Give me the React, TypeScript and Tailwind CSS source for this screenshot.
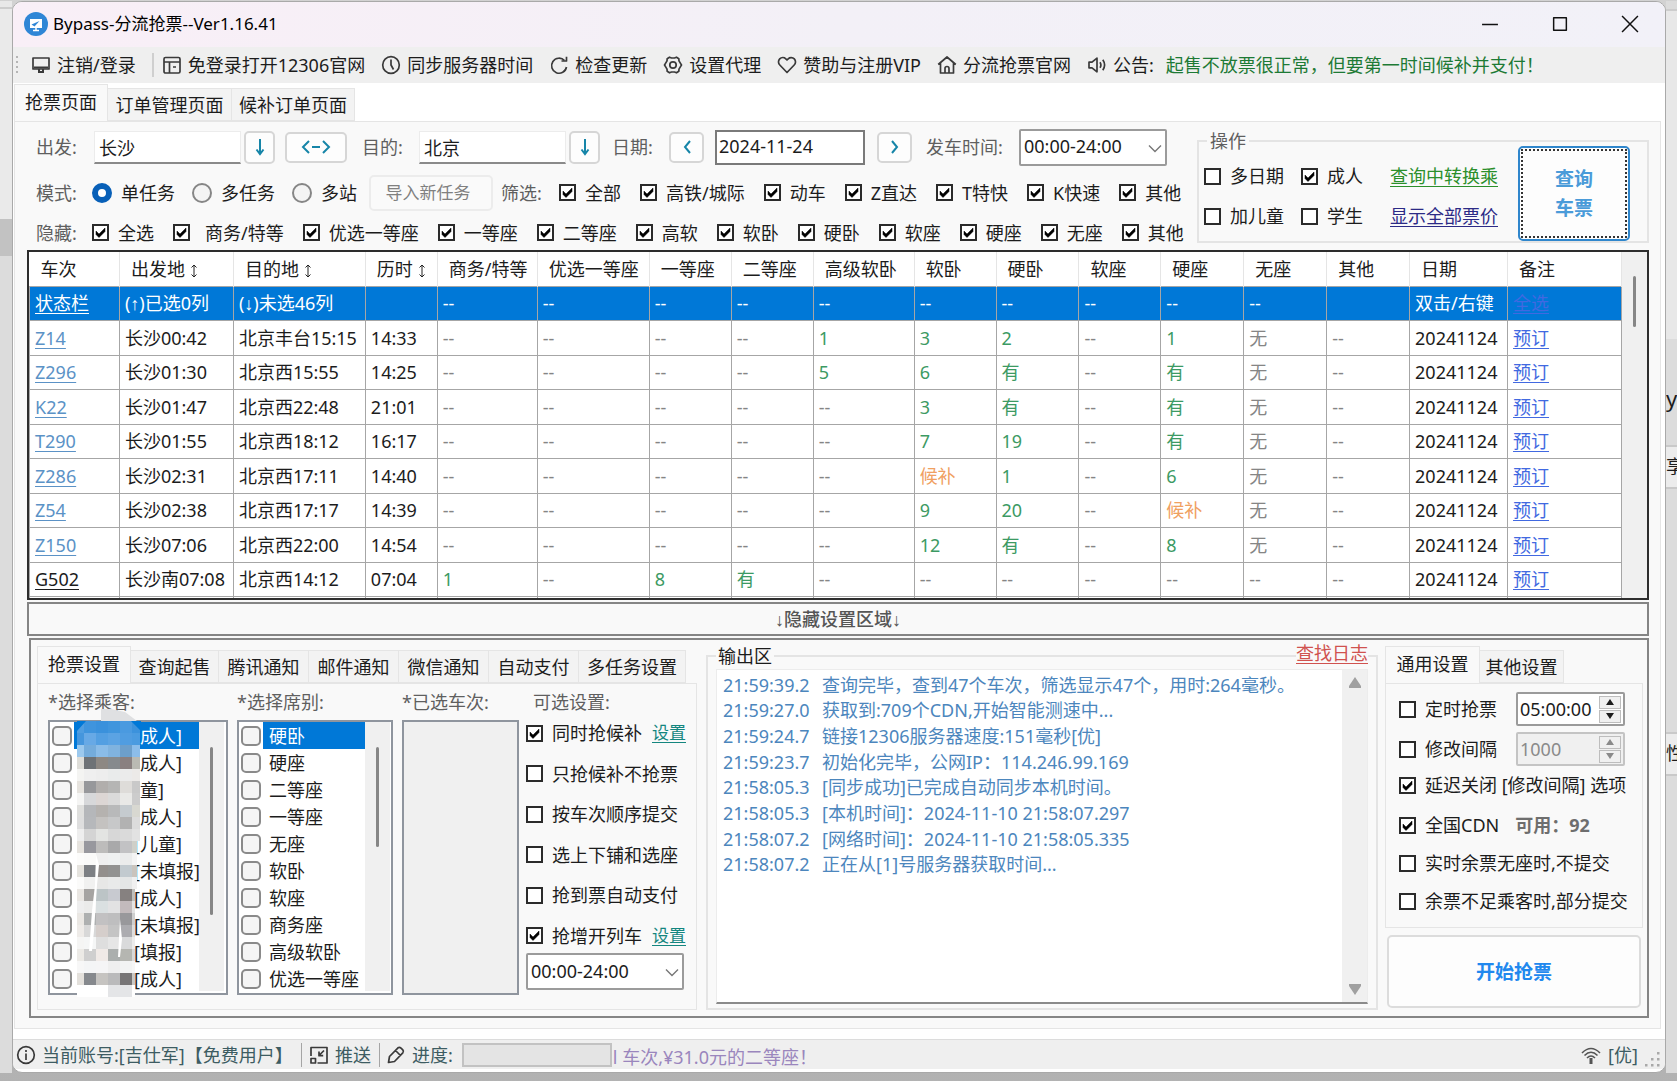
import type { ReactNode } from "react";

const links = "underline underline-offset-3 decoration-1";

type Check = { label: string; checked?: boolean; wide?: boolean };

const trainTypes = ["全部", "高铁/城际", "动车", "Z直达", "T特快", "K快速", "其他"];

const seatTypes = [
  "全选",
  "商务/特等",
  "优选一等座",
  "一等座",
  "二等座",
  "高软",
  "软卧",
  "硬卧",
  "软座",
  "硬座",
  "无座",
  "其他",
];

const columns = [
  { name: "车次", width: "w-[90px]" },
  { name: "出发地", width: "w-[114px]", sort: true },
  { name: "目的地", width: "w-[132px]", sort: true },
  { name: "历时", width: "w-[72px]", sort: true },
  { name: "商务/特等", width: "w-[100px]" },
  { name: "优选一等座", width: "w-[112px]" },
  { name: "一等座", width: "w-[82px]" },
  { name: "二等座", width: "w-[82px]" },
  { name: "高级软卧", width: "w-[101px]" },
  { name: "软卧", width: "w-[82px]" },
  { name: "硬卧", width: "w-[83px]" },
  { name: "软座", width: "w-[82px]" },
  { name: "硬座", width: "w-[83px]" },
  { name: "无座", width: "w-[83px]" },
  { name: "其他", width: "w-[83px]" },
  { name: "日期", width: "w-[98px]" },
  { name: "备注", width: "w-[114px]" },
];

const trains = [
  ["Z14", "长沙00:42", "北京丰台15:15", "14:33", "--", "--", "--", "--", "1", "3", "2", "--", "1", "无", "--"],
  ["Z296", "长沙01:30", "北京西15:55", "14:25", "--", "--", "--", "--", "5", "6", "有", "--", "有", "无", "--"],
  ["K22", "长沙01:47", "北京西22:48", "21:01", "--", "--", "--", "--", "--", "3", "有", "--", "有", "无", "--"],
  ["T290", "长沙01:55", "北京西18:12", "16:17", "--", "--", "--", "--", "--", "7", "19", "--", "有", "无", "--"],
  ["Z286", "长沙02:31", "北京西17:11", "14:40", "--", "--", "--", "--", "--", "候补", "1", "--", "6", "无", "--"],
  ["Z54", "长沙02:38", "北京西17:17", "14:39", "--", "--", "--", "--", "--", "9", "20", "--", "候补", "无", "--"],
  ["Z150", "长沙07:06", "北京西22:00", "14:54", "--", "--", "--", "--", "--", "12", "有", "--", "8", "无", "--"],
  ["G502", "长沙南07:08", "北京西14:12", "07:04", "1", "--", "8", "有", "--", "--", "--", "--", "--", "--", "--"],
];

const statusRow = ["(↑)已选0列", "(↓)未选46列", "", "--", "--", "--", "--", "--", "--", "--", "--", "--", "--", "", "双击/右键"];

const settingTabs = [
  { name: "查询起售", width: "w-[88px]" },
  { name: "腾讯通知", width: "w-[90px]" },
  { name: "邮件通知", width: "w-[90px]" },
  { name: "微信通知", width: "w-[90px]" },
  { name: "自动支付", width: "w-[90px]" },
  { name: "多任务设置", width: "w-[107px]" },
];

const passengers = [
  "[成人]",
  "[成人]",
  "[童]",
  "[成人]",
  "[儿童]",
  "[未填报]",
  "[成人]",
  "[未填报]",
  "[填报]",
  "[成人]",
];

const seats = ["硬卧", "硬座", "二等座", "一等座", "无座", "软卧", "软座", "商务座", "高级软卧", "优选一等座"];

const options = [
  { label: "同时抢候补", checked: true, setup: true },
  { label: "只抢候补不抢票" },
  { label: "按车次顺序提交" },
  { label: "选上下铺和选座" },
  { label: "抢到票自动支付" },
  { label: "抢增开列车", checked: true, setup: true },
];

const logs = [
  ["21:59:39.2", "查询完毕，查到47个车次，筛选显示47个，用时:264毫秒。"],
  ["21:59:27.0", "获取到:709个CDN,开始智能测速中..."],
  ["21:59:24.7", "链接12306服务器速度:151毫秒[优]"],
  ["21:59:23.7", "初始化完毕，公网IP：114.246.99.169"],
  ["21:58:05.3", "[同步成功]已完成自动同步本机时间。"],
  ["21:58:05.3", "[本机时间]：2024-11-10 21:58:07.297"],
  ["21:58:07.2", "[网络时间]：2024-11-10 21:58:05.335"],
  ["21:58:07.2", "正在从[1]号服务器获取时间..."],
];

// censored passenger names, one row of tiles per 12px
const mosaic = [
  ["#4f9de0", "#3f94dd", "#3a91dc", "#3f95dd", "#4a9ae0", "#3c92dc"],
  ["#4596dd", "#67a9e6", "#539fe2", "#5ba3e3", "#509de1", "#4b9be0"],
  ["#9cc9ee", "#74acdc", "#8abce8", "#80b3df", "#6d9fcb", "#8cbdea"],
  ["#deddd8", "#6e7276", "#8d8883", "#868a8d", "#8a8080", "#babab3"],
  ["#f4f4f2", "#efefef", "#ededed", "#e9ebeb", "#ebebeb", "#eceae8"],
  ["#e6e3de", "#97989b", "#b1aeac", "#b5b5b4", "#dedcd9", "#c9c9c9"],
  ["#f5f5f4", "#d7d8da", "#dcd6d4", "#dadada", "#e9e9e7", "#cccccc"],
  ["#dfdfdd", "#b5b7ba", "#b5b2af", "#b8b9ba", "#c5cbcf", "#d8d8d1"],
  ["#dedede", "#b6b8bb", "#c4c2c0", "#c7c8c9", "#b2b2b2", "#dcdcdc"],
  ["#eeeeee", "#d4d4d4", "#e3e4e2", "#d7d7d7", "#dadada", "#e2e2e2"],
  ["#e6e3de", "#98989e", "#bdbcbb", "#a9a9aa", "#c2c2c4", "#cfcfc8"],
  ["#fcfcfb", "#fafaf9", "#efefef", "#eff1f1", "#ebecec", "#f4f4f4"],
  ["#e5e3de", "#7d8084", "#938f8c", "#929291", "#c2cacf", "#cac4bd"],
  ["#fbfbfa", "#f1f1f0", "#e7e7e6", "#e9eaea", "#e4e6e6", "#f0f0f0"],
  ["#e9e6e2", "#a6a4a2", "#bcc4c6", "#c8cad0", "#868180", "#bfbfbc"],
  ["#eeeeee", "#ebebea", "#dae0e1", "#e2e2e3", "#c2babc", "#e3e3e3"],
  ["#eae7e3", "#aeb0b0", "#c2c1c2", "#bebebf", "#98989b", "#cfcfcf"],
  ["#eeebe8", "#d8d8d8", "#d5cecb", "#c4c4c4", "#acacb0", "#dddddd"],
  ["#f5f5f4", "#f5f6f6", "#dedede", "#e6e6e6", "#d9dadb", "#ececec"],
  ["#eceae6", "#cfcfcf", "#f0eae7", "#abafae", "#b5b6b1", "#d8d8d8"],
  ["#f7f7f7", "#f4f5f6", "#f5f5f6", "#efefef", "#f2f3f3", "#f6f6f6"],
  ["#e3e0db", "#86898d", "#c6c4c1", "#bababb", "#777576", "#c8c8c5"],
  ["#ffffff", "#ffffff", "#ffffff", "#e4e5e7", "#e4e5e7", "#ffffff"],
];

function CheckBox({ label, checked, wide }: Check) {
  return (
    <label className={`flex shrink-0 items-center ${wide ? "gap-[15px]" : "gap-[9px]"}`}>
      <span className="relative size-[17px]">
        <input
          type="checkbox"
          defaultChecked={checked}
          className="peer block size-[17px] appearance-none border-2 border-[#2b2b2b] bg-white"
        />
        <svg viewBox="0 0 17 17" className="pointer-events-none absolute inset-0 hidden size-[17px] peer-checked:block">
          <path d="M4 7l3 3 6-6v3.5l-6 6-3-3z" fill="#000" stroke="#000" strokeWidth="0.5" />
        </svg>
      </span>
      {label}
    </label>
  );
}

function Radio({ label, checked }: Check) {
  return (
    <label className="flex shrink-0 items-center gap-[9px]">
      <input
        type="radio"
        name="mode"
        defaultChecked={checked}
        className="size-5 appearance-none rounded-full border-2 border-[#868686] bg-[#f4f4f4] checked:border-[6px] checked:border-[#0860b8] checked:bg-white"
      />
      {label}
    </label>
  );
}

function TimeSelect({ id, width }: { id: string; width: string }) {
  return (
    <div className={`relative shrink-0 ${width}`}>
      <select
        id={id}
        aria-label="时间段"
        className="block h-[37px] w-full appearance-none rounded-[2px] border-2 border-[#9b9b9b] bg-white pb-[2px] pl-[3px]"
      >
        <option>00:00-24:00</option>
      </select>
      <svg viewBox="0 0 14 10" className="pointer-events-none absolute top-[15px] right-[5px] h-[10px] w-[14px]">
        <path d="M1 1.500l6 6 6-6" fill="none" stroke="#777" strokeWidth="1.4" />
      </svg>
    </div>
  );
}

function IconButton({ name, className, children }: { name: string; className: string; children: ReactNode }) {
  return (
    <button
      aria-label={name}
      className={`flex shrink-0 items-center justify-center rounded-[5px] border-2 border-[#d6d6d6] bg-[#fdfdfd] text-[#1685a8] ${className}`}
    >
      {children}
    </button>
  );
}

function Glyph({ d, w = 20 }: { d: string; w?: number }) {
  return (
    <svg width={w} height="20" viewBox={`0 0 ${w} 20`} fill="none" stroke="currentColor" strokeWidth="2">
      <path d={d} />
    </svg>
  );
}

function ToolIcon({ children }: { children: ReactNode }) {
  return (
    <svg
      viewBox="0 0 20 20"
      className="size-5 shrink-0"
      fill="none"
      stroke="#3a3a3a"
      strokeWidth="1.7"
      strokeLinejoin="round"
    >
      {children}
    </svg>
  );
}

function ToolItem({ icon, text }: { icon: ReactNode; text: string }) {
  return (
    <button className="flex shrink-0 items-center gap-[6px] whitespace-nowrap">
      <ToolIcon>{icon}</ToolIcon>
      {text}
    </button>
  );
}

function Tab({ text, width, active }: { text: string; width: string; active?: boolean }) {
  return (
    <button
      className={
        active
          ? `h-[37px] shrink-0 border border-b-0 border-[#e5e5e5] bg-[#f9f9f9] pb-[2px] ${width}`
          : `h-[33px] shrink-0 border border-l-0 border-[#e5e5e5] bg-[#f3f3f3] ${width}`
      }
    >
      {text}
    </button>
  );
}

function Toolbar() {
  return (
    <div className="flex h-[36px] items-center gap-4 overflow-hidden bg-[#efefef] pb-px pl-[3px] whitespace-nowrap">
      <div className="-mr-[3px] flex flex-col gap-[3px]">
        {[0, 1, 2, 3].map((n) => (
          <i key={n} className="size-[2px] bg-[#b5b5b5]" />
        ))}
      </div>
      <ToolItem
        text="注销/登录"
        icon={
          <>
            <path d="M2 3h16v11H2z" />
            <path d="M3 12.500h14M7 17h6M8 14v3M12 14v3" strokeWidth="2" />
          </>
        }
      />
      <div className="-mr-[8px] h-[24px] w-[2px] bg-[#cfcfcf]" />
      <ToolItem
        text="免登录打开12306官网"
        icon={
          <>
            <rect x="2" y="2.500" width="16" height="15.500" rx="1.500" />
            <path d="M2 7h16M7.500 7v11M11 12h3" />
          </>
        }
      />
      <ToolItem
        text="同步服务器时间"
        icon={
          <>
            <circle cx="10" cy="10" r="8.300" />
            <path d="M10 4.500V10l2.500 4.500" />
          </>
        }
      />
      <ToolItem
        text="检查更新"
        icon={
          <>
            <path d="M15.500 5.500A7.500 7.500 0 1 0 17.500 12" />
            <path d="M12.500 6h5V1.800" />
          </>
        }
      />
      <ToolItem
        text="设置代理"
        icon={
          <>
            <path d="M6.500 2.200l2 .8h3l2-.8 2.300 1.500.2 2.200 1.500 2.500 1 1.600-1 1.600-1.500 2.500-.2 2.200-2.300 1.500-2-.8h-3l-2 .8-2.300-1.500-.2-2.200-1.500-2.500-1-1.600 1-1.600L4 5.900l.2-2.200z" />
            <circle cx="10" cy="10" r="3.200" />
          </>
        }
      />
      <ToolItem
        text="赞助与注册VIP"
        icon={<path d="M10 17.500L2.800 10a4.300 4.300 0 0 1 6-6.200L10 5l1.200-1.200a4.300 4.300 0 0 1 6 6.200z" />}
      />
      <ToolItem
        text="分流抢票官网"
        icon={<path d="M1.200 9.500L10 2l8.800 7.500M3.500 8v10h13V8M8 18v-4.500a2 2 0 0 1 4 0V18" />}
      />
      <ToolItem
        text="公告:"
        icon={<path d="M2 7.200v5.600h3l5 4V3.200l-5 4zM13 7.200q1.800 2.800 0 5.600M15.800 4.800q3.600 5.200 0 10.400" />}
      />
      <span className="-ml-[4px] text-[#1d7a35]">起售不放票很正常，但要第一时间候补并支付！</span>
    </div>
  );
}

function QueryPanel() {
  const input = "h-[33px] shrink-0 border border-b-2 border-[#ececec] border-b-[#8a8a8a] bg-white pl-1";
  return (
    <div className="flex h-[128px] pt-[2px]">
      <div className="flex min-w-0 flex-1 flex-col pl-[9px] whitespace-nowrap">
        <div className="flex h-[46px] items-center">
          <label htmlFor="from" className="w-[58px] shrink-0 text-[#5f5f5f]">出发:</label>
          <input id="from" defaultValue="长沙" className={`w-[147px] ${input}`} />
          <IconButton name="选择出发站" className="ml-[3px] h-[33px] w-[31px]">
            <Glyph d="M10 2v15M6.500 12.500l3.500 4.500 3.500-4.500" />
          </IconButton>
          <IconButton name="交换" className="ml-[10px] h-[31px] w-[62px]">
            <Glyph w={32} d="M9 4l-6 6 6 6M12 10h8M23 4l6 6-6 6" />
          </IconButton>
          <label htmlFor="to" className="ml-[15px] w-[57px] shrink-0 text-[#5f5f5f]">目的:</label>
          <input id="to" defaultValue="北京" className={`w-[147px] ${input}`} />
          <IconButton name="选择目的站" className="ml-[3px] h-[33px] w-[31px]">
            <Glyph d="M10 2v15M6.500 12.500l3.500 4.500 3.500-4.500" />
          </IconButton>
          <label htmlFor="date" className="ml-[12px] w-[57px] shrink-0 text-[#5f5f5f]">日期:</label>
          <IconButton name="前一天" className="h-[31px] w-[35px]">
            <Glyph d="M13 4l-5 6 5 6" />
          </IconButton>
          <input
            id="date"
            defaultValue="2024-11-24"
            className="ml-[11px] h-[35px] w-[150px] shrink-0 border-2 border-[#7a7a7a] bg-white pb-[2px] pl-[2px]"
          />
          <IconButton name="后一天" className="ml-[12px] h-[31px] w-[35px]">
            <Glyph d="M7 4l5 6-5 6" />
          </IconButton>
          <label htmlFor="depart" className="ml-[14px] w-[93px] shrink-0 text-[#5f5f5f]">发车时间:</label>
          <TimeSelect id="depart" width="w-[148px]" />
        </div>
        <div className="flex h-[45px] items-center">
          <span className="w-[56px] shrink-0 text-[#5f5f5f]">模式:</span>
          <div className="flex gap-[17px]">
            <Radio label="单任务" checked />
            <Radio label="多任务" />
            <Radio label="多站" />
          </div>
          <button className="ml-[12px] h-[36px] w-[124px] shrink-0 rounded-[5px] border-2 border-[#ececec] bg-[#fafafa] pr-[6px] text-[17px] text-[#808080]">
            导入新任务
          </button>
          <span className="ml-[8px] w-[58px] shrink-0 text-[#5f5f5f]">筛选:</span>
          <div className="flex gap-[19px]">
            {trainTypes.map((t) => (
              <CheckBox key={t} label={t} checked />
            ))}
          </div>
        </div>
        <div className="flex h-[35px] items-center">
          <span className="w-[56px] shrink-0 text-[#5f5f5f]">隐藏:</span>
          <div className="flex gap-[19px]">
            {seatTypes.map((t) => (
              <CheckBox key={t} label={t} checked wide={t === "商务/特等"} />
            ))}
          </div>
        </div>
      </div>
      <fieldset className="mt-[5px] flex h-[114px] w-[452px] shrink-0 gap-5 border-2 border-[#e4e4e4] pl-[5px] whitespace-nowrap">
        <legend className="ml-[3px] px-[3px] leading-6 text-[#5f5f5f]">操作</legend>
        <div className="mt-[3px] grid h-[80px] grid-cols-[97px_89px_auto] items-center">
          <CheckBox label="多日期" />
          <CheckBox label="成人" checked />
          <a href="#transfer" className={`text-[#2b8f2b] ${links}`}>查询中转换乘</a>
          <CheckBox label="加儿童" />
          <CheckBox label="学生" />
          <a href="#prices" className={`text-[#2c2a86] ${links}`}>显示全部票价</a>
        </div>
        <button className="-mt-[7px] h-[95px] w-[112px] rounded-[5px] border-2 border-[#2f86cc] bg-[#fdfdfd] p-px font-bold text-[#4a9bd9]">
          <span className="flex h-full items-center justify-center border-2 border-dotted border-[#333] text-[19px] leading-[29px]">
            查询
            <br />
            车票
          </span>
        </button>
      </fieldset>
    </div>
  );
}

function cellColor(value: string) {
  if (value === "--" || value === "无") return "text-[#858585]";
  if (value === "候补") return "text-[#f0a061]";
  return "text-[#3c9a63]";
}

function TrainTable() {
  const cell = "border border-[#a6a6a6] p-0 pl-[5px]";
  return (
    <div className="flex h-[350px] overflow-hidden border-2 border-[#2d2d2d] bg-white">
      <table className="min-w-0 flex-1 table-fixed border-collapse text-left whitespace-nowrap">
        <thead>
          <tr className="h-[34px]">
            {columns.map((c) => (
              <th key={c.name} className={`border-r border-[#e5e5e5] p-0 pl-[11px] font-normal ${c.width}`}>
                {c.name}
                {c.sort && (
                  <svg viewBox="0 0 8 14" className="ml-[5px] inline h-[14px] w-[8px]" fill="none" stroke="#222">
                    <path d="M4 1v12M1.500 3.500L4 1l2.500 2.500M1.500 10.500L4 13l2.500-2.500" />
                  </svg>
                )}
              </th>
            ))}
          </tr>
        </thead>
        <tbody>
          <tr className="h-[34px] bg-[#0078d7] text-white">
            <td className={cell}>
              <a href="#status" className={links}>状态栏</a>
            </td>
            {statusRow.map((v, i) => (
              <td key={i} className={cell}>{v}</td>
            ))}
            <td className={cell}>
              <a href="#all" className={`text-[#4169e1] ${links}`}>全选</a>
            </td>
          </tr>
          {trains.map(([no, from, to, time, ...rest]) => (
            <tr key={no} className="odd:h-[34px] even:h-[35px]">
              <td className={cell}>
                <a href={`#${no}`} className={`${no === "G502" ? "text-[#1c1c1c]" : "text-[#5b92c6]"} ${links}`}>
                  {no}
                </a>
              </td>
              <td className={cell}>{from}</td>
              <td className={cell}>{to}</td>
              <td className={cell}>{time}</td>
              {rest.map((v, i) => (
                <td key={i} className={`${cell} ${cellColor(v)}`}>{v}</td>
              ))}
              <td className={cell}>20241124</td>
              <td className={cell}>
                <a href={`#book-${no}`} className={`text-[#4169e1] ${links}`}>预订</a>
              </td>
            </tr>
          ))}
          <tr className="h-[4px]">
            {columns.map((c) => (
              <td key={c.name} className="border-x border-[#a6a6a6] p-0" />
            ))}
          </tr>
        </tbody>
      </table>
      <div className="w-[25px] shrink-0 bg-[#f0f0f0] pt-[24px]">
        <div className="mx-auto h-[51px] w-[3px] rounded-full bg-[#868686]" />
      </div>
    </div>
  );
}

function CheckList({ items, kind, thumb }: { items: string[]; kind: "passenger" | "seat"; thumb: string }) {
  const passenger = kind === "passenger";
  return (
    <div className="flex h-[275px] border-2 border-[#8f959e] bg-white pr-[2px] pb-[2px] pl-px">
      <div className="flex-1">
        {items.map((t, i) => (
          <label key={i} className="flex h-[27px] items-center pl-px">
            <input
              type="checkbox"
              className="size-[20px] shrink-0 appearance-none rounded-[5px] border-2 border-[#8a8a8a] bg-[#f5f5f5]"
            />
            <span
              className={`ml-[2px] flex h-[27px] items-center whitespace-nowrap ${passenger ? "w-[125px] pl-[60px]" : "w-[102px] pl-[6px]"} ${i === 0 ? "bg-[#0078d7] text-white" : ""}`}
            >
              {t}
            </span>
          </label>
        ))}
      </div>
      <div className="w-[25px] shrink-0 bg-[#f0f0f0] pt-[25px]">
        <div className={`mx-auto w-[3px] rounded-full bg-[#868686] ${thumb}`} />
      </div>
    </div>
  );
}

function Mosaic() {
  return (
    <svg viewBox="0 0 64 288" className="pointer-events-none absolute -top-[11px] left-[29px] h-[288px] w-[64px]">
      <path d="M24 12V0h10l14 3 12 9z" fill="#dfe0e2" />
      {mosaic.map((row, y) =>
        row.map((fill, x) => {
          // the last column narrows further down the list
          const last = y > 13 ? 3 : y > 9 ? 5 : 8;
          return (
            <rect
              key={`${x}-${y}`}
              x={x === 0 ? 0 : x * 12 - 5}
              y={12 + y * 12}
              width={x === 0 ? 7 : x === 5 ? last : 12}
              height="12"
              fill={fill}
            />
          );
        }),
      )}
      <path d="M19 145l3 11-2 20-1 16-2 30-2 20h-3l3-40 3-26zM43 210l2 20-2 18h-2z" fill="#fff" />
      <path d="M34 276h14v12H36z" fill="#e4e5e7" />
      <path d="M0 12h9L0 22zM54 12h10v10z" fill="#0078d7" />
    </svg>
  );
}

function GrabSettings() {
  return (
    <div className="flex w-[660px] shrink-0 flex-col">
      <div className="flex h-[36px] items-end">
        <Tab text="抢票设置" width="w-[94px]" active />
        {settingTabs.map((t) => (
          <Tab key={t.name} text={t.name} width={t.width} />
        ))}
      </div>
      <div className="flex h-[327px] border border-[#e5e5e5] pl-[10px] whitespace-nowrap">
        <div className="w-[180px]">
          <h3 className="h-[36px] leading-[36px] text-[#5f5f5f]">*选择乘客:</h3>
          <div className="relative">
            <CheckList items={passengers} kind="passenger" thumb="h-[168px]" />
            <Mosaic />
          </div>
        </div>
        <div className="ml-[9px] w-[156px]">
          <h3 className="h-[36px] leading-[36px] text-[#5f5f5f]">*选择席别:</h3>
          <CheckList items={seats} kind="seat" thumb="h-[100px]" />
        </div>
        <div className="ml-[9px] w-[117px]">
          <h3 className="h-[36px] leading-[36px] text-[#5f5f5f]">*已选车次:</h3>
          <div className="h-[275px] border-2 border-[#8f959e] bg-[#f0f0f0]" />
        </div>
        <div className="ml-[7px] w-[160px]">
          <h3 className="h-[36px] pl-[7px] leading-[36px] text-[#5f5f5f]">可选设置:</h3>
          <div className="mb-[4px] flex h-[229px] flex-col justify-between">
            {options.map((o) => (
              <div key={o.label} className="flex h-[26px] items-center justify-between">
                <CheckBox label={o.label} checked={o.checked} />
                {o.setup && <a href="#setup" className={`text-[17px] text-[#14867f] ${links}`}>设置</a>}
              </div>
            ))}
          </div>
          <TimeSelect id="extra" width="w-[158px]" />
        </div>
      </div>
    </div>
  );
}

function Output() {
  return (
    <fieldset className="relative -mt-[4px] ml-[9px] h-[367px] min-w-0 flex-1 border-2 border-[#e4e4e4] px-[8px]">
      <legend className="px-[2px] leading-[26px]">输出区</legend>
      <a href="#log" className={`absolute -top-[29px] right-[8px] bg-[#f9f9f9] text-[#d0524f] ${links}`}>查找日志</a>
      <div className="flex h-[335px] border border-b-2 border-[#ececec] border-b-[#8a8a8a] bg-white">
        <ol className="grid h-[207px] min-w-0 flex-1 grid-rows-8 items-center pt-[2px] pl-[6px] whitespace-nowrap text-[#4c86bd]">
          {logs.map(([time, text], i) => (
            <li key={i} className="flex">
              <time className="w-[99px] shrink-0">{time}</time>
              {text}
            </li>
          ))}
        </ol>
        <div className="flex w-[25px] shrink-0 flex-col items-center justify-between bg-[#f0f0f0] py-[7px]">
          <svg viewBox="0 0 14 12" className="h-[12px] w-[14px]" fill="#a0a0a0">
            <path d="M7 0l6 9v2H1V9z" />
          </svg>
          <svg viewBox="0 0 14 12" className="h-[12px] w-[14px]" fill="#a0a0a0">
            <path d="M7 12l6-9V1H1v2z" />
          </svg>
        </div>
      </div>
    </fieldset>
  );
}

function Spinner({ value, label, disabled }: { value: string; label: string; disabled?: boolean }) {
  const step = "flex h-[13px] w-[22px] items-center justify-center border border-[#bdbdbd] bg-[#f0f0f0]";
  return (
    <div
      className={`flex h-[34px] w-[109px] items-center rounded-[2px] border-2 ${disabled ? "border-[#c4c4c4] bg-[#f0f0f0] text-[#8a8a8a]" : "border-[#9b9b9b] bg-white"}`}
    >
      <input aria-label={label} defaultValue={value} disabled={disabled} className="w-[80px] min-w-0 flex-1 pl-[2px]" />
      <div className="mr-[2px] flex flex-col gap-px">
        <button aria-label="增加" className={step}>
          <svg viewBox="0 0 8 6" className="h-[6px] w-[8px]" fill="currentColor"><path d="M4 0l4 6H0z" /></svg>
        </button>
        <button aria-label="减少" className={step}>
          <svg viewBox="0 0 8 6" className="h-[6px] w-[8px]" fill="currentColor"><path d="M4 6l4-6H0z" /></svg>
        </button>
      </div>
    </div>
  );
}

function CommonSettings() {
  return (
    <div className="mr-[4px] ml-[7px] flex w-[258px] shrink-0 flex-col whitespace-nowrap">
      <div className="flex h-[36px] items-end">
        <Tab text="通用设置" width="w-[95px]" active />
        <Tab text="其他设置" width="w-[84px]" />
      </div>
      <div className="h-[245px] border border-[#e5e5e5] pt-[8px] pl-[13px]">
        <div className="mb-[6px] flex items-center gap-[19px]">
          <CheckBox label="定时抢票" />
          <Spinner value="05:00:00" label="定时" />
        </div>
        <div className="flex items-center gap-[19px]">
          <CheckBox label="修改间隔" />
          <Spinner value="1000" label="间隔" disabled />
        </div>
        <div className="mb-[2px] flex h-[38px] items-center">
          <CheckBox label="延迟关闭 [修改间隔] 选项" checked />
        </div>
        <div className="flex h-[38px] items-center gap-[16px]">
          <CheckBox label="全国CDN" checked />
          <b className="text-[#6e6e6e]">可用：92</b>
        </div>
        <div className="flex h-[38px] items-center">
          <CheckBox label="实时余票无座时,不提交" />
        </div>
        <div className="flex h-[38px] items-center">
          <CheckBox label="余票不足乘客时,部分提交" />
        </div>
      </div>
      <button className="mx-[2px] mt-[7px] h-[73px] rounded-[5px] border-2 border-[#dcdcdc] bg-[#fdfdfd] text-[19px] font-bold text-[#2188ee]">
        开始抢票
      </button>
    </div>
  );
}

function StatusBar() {
  return (
    <footer className="flex h-[30px] items-center border-t border-[#dcdcdc] bg-[#efefef] pl-[3px] whitespace-nowrap text-[#3d5c62]">
      <ToolIcon>
        <circle cx="10" cy="10" r="8.300" />
        <path d="M10 8.500V15M10 5v2" />
      </ToolIcon>
      <span className="ml-[6px] w-[259px]">当前账号:[吉仕军]【免费用户】</span>
      <i className="h-[24px] w-px bg-[#a5a5a5]" />
      <button className="ml-[7px] flex items-center gap-[6px]">
        <ToolIcon>
          <path d="M2 11V2.500h16V18H8.500M15 5.500L10 10.500M10 6.500v4.200h4.200M2 13.500h4.500V18H2z" />
        </ToolIcon>
        推送
      </button>
      <i className="ml-[8px] h-[24px] w-px bg-[#a5a5a5]" />
      <div className="ml-[6px] flex items-center gap-[6px]">
        <ToolIcon>
          <path d="M2.500 17.500l1-6L12 2.800q1.500-1 3 .3l1.800 1.800q1.300 1.500 0 3L8.500 16.500zM9.500 5.500l5 5" />
        </ToolIcon>
        进度:
      </div>
      <div className="ml-[9px] h-[24px] w-[150px] border-2 border-[#c2c2c2] bg-[#e4e4e4]" />
      <span className="flex-1 pt-[4px] pl-px text-[#9a86bd]">l 车次,¥31.0元的二等座！</span>
      <svg viewBox="0 0 20 20" className="size-5" fill="none" stroke="#555" strokeWidth="1.600">
        <path d="M1 8q9-9 18 0M3.500 10.500q6.500-6.500 13 0M6 13q4-4 8 0" />
        <path d="M10 13v6" strokeWidth="3" />
      </svg>
      <span className="ml-[7px] w-[36px]">[优]</span>
      <svg viewBox="0 0 18 18" className="mr-[3px] size-[18px] self-end" fill="#a9a9a9">
        <path d="M1 13h2.500v2.500H1zM7 13h2.500v2.500H7zM13 13h2.500v2.500H13zM7 7h2.500v2.500H7zM13 7h2.500v2.500H13zM13 1h2.500v2.500H13z" />
      </svg>
    </footer>
  );
}

function TitleBar() {
  return (
    <header className="flex h-[45px] items-center bg-linear-to-r from-[#f9eff7] via-[#f3f0f7] to-[#f2f1f8] pb-[2px] pl-[11px]">
      <svg viewBox="0 0 24 24" className="size-6">
        <circle cx="12" cy="12" r="12" fill="#2f86d6" />
        <path d="M6 7h12v9H6z" fill="#fff" />
        <path d="M9 18.500h6M12 16v2" stroke="#fff" strokeWidth="1.500" />
        <path d="M7.500 12.500l8-3.500-5 5.500z" fill="#2f86d6" />
      </svg>
      <h1 className="ml-[5px] flex-1 text-[17px] text-black">Bypass-分流抢票--Ver1.16.41</h1>
      <div className="flex gap-[52px] pr-[26px]">
        {["M1 9h15", "M2.500 2.500h12v12h-12z", "M1 1l15 15M16 1L1 16"].map((d, i) => (
          <button key={d} aria-label={["最小化", "最大化", "关闭"][i]}>
            <svg viewBox="0 0 17 17" className="size-[18px]" fill="none" stroke="#111" strokeWidth="1.400">
              <path d={d} strokeLinejoin="round" />
            </svg>
          </button>
        ))}
      </div>
    </header>
  );
}

export default function App() {
  return (
    <div className="min-h-screen bg-linear-to-b from-[#d2d2d2] to-[#b2b2b2] pt-px pb-[11px] font-['Noto_Sans','Liberation_Sans','Noto_Sans_CJK_SC',sans-serif] text-[18px] leading-[26px] text-[#1c1c1c]">
      <div className="flex">
        <div className="flex w-[12px] shrink-0 flex-col bg-[#dcdcdc]">
          <div className="h-[8px] border-b-2 border-[#cdcdcd] bg-[#e8e8e8]" />
          <div className="h-[210px] bg-[#eaeaea]" />
          <div className="h-[37px] bg-[#c2c2c2]" />
        </div>
        <main className="min-w-0 flex-1 overflow-hidden rounded-[10px] border border-[#a9a9a9] bg-white">
          <TitleBar />
          <Toolbar />
          <div className="flex h-[38px] items-end pt-[2px] pl-px">
            <Tab text="抢票页面" width="w-[94px]" active />
            <Tab text="订单管理页面" width="w-[124px]" />
            <Tab text="候补订单页面" width="w-[123px]" />
          </div>
          <section className="mr-[4px] ml-px border border-[#e5e5e5] bg-[#f9f9f9] pr-[11px] pb-[10px] pl-[12px]">
            <QueryPanel />
            <TrainTable />
            <button className="mt-[2px] block h-[34px] w-full border-2 border-[#858585] font-medium text-[#555]">
              ↓隐藏设置区域↓
            </button>
            <div className="mt-[2px] ml-[2px] flex h-[380px] border-2 border-[#858585] pt-[7px] pl-[6px]">
              <GrabSettings />
              <Output />
              <CommonSettings />
            </div>
          </section>
          <div className="h-[10px]" />
          <StatusBar />
          <div className="h-[3px]" />
        </main>
        {/* window lying behind, only its edge shows */}
        <aside className="flex w-[11px] shrink-0 flex-col overflow-hidden bg-[#dcdcdc] pt-[8px] text-[22px] leading-[30px]">
          <div className="h-[330px] border-t-2 border-[#cdcdcd] bg-[#e8e8e8]" />
          <div className="h-[44px] pt-[44px]">y</div>
          <div className="mt-[62px] h-[44px] border-y-2 border-[#c9c9c9] bg-[#ececec] pt-[4px] text-[18px]">享</div>
          <div className="mt-[243px] h-[44px] border-y-2 border-[#c9c9c9] bg-[#ececec] pt-[4px] text-[18px]">性</div>
        </aside>
      </div>
    </div>
  );
}
